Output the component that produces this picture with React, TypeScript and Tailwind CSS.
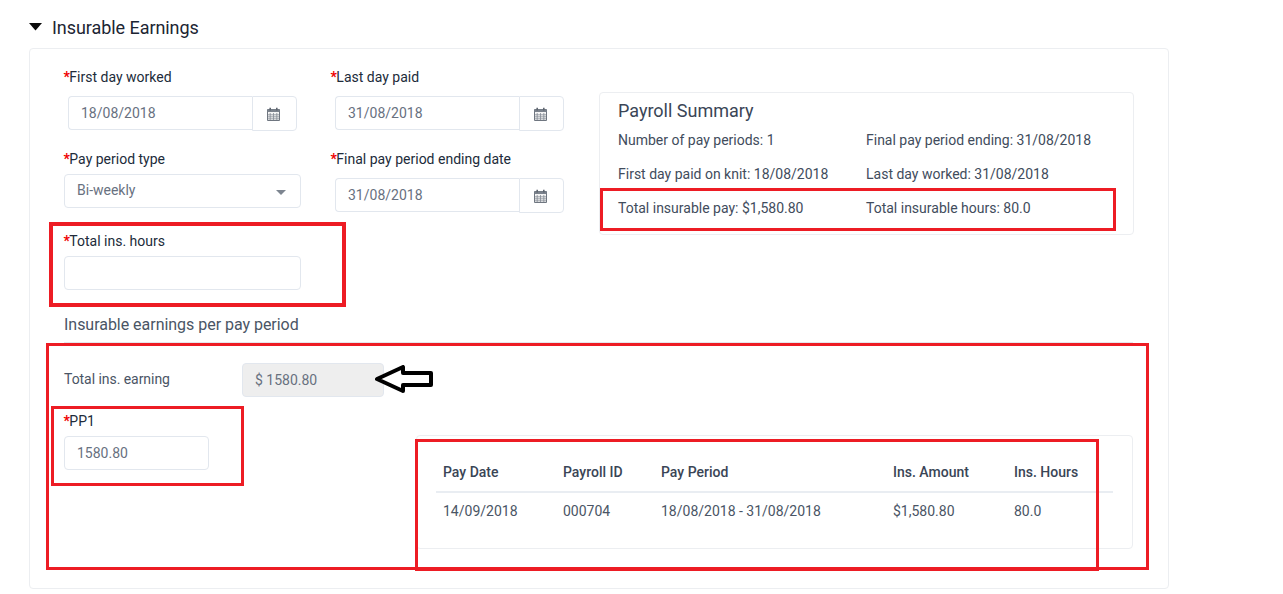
import React from "react";

const Cal = () => (
  <svg width="13" height="14" viewBox="0 0 13 14" className="block">
    <path d="M0.5 2.5H12.5V13.5H0.5Z" fill="#f4f4f4" stroke="#6f7680" />
    <path d="M0.5 2.5H12.5V5H0.5Z" fill="#7b828c" />
    <path d="M3.2 6V13M6.5 6V13M9.8 6V13M1 7.8H12M1 9.8H12M1 11.8H12" stroke="#858c95" strokeWidth="0.8" />
    <path d="M3.2 0.8V3.4M9.8 0.8V3.4" stroke="#5f6670" strokeWidth="1.6" />
  </svg>
);

const Label = ({ children }: { children: React.ReactNode }) => (
  <div className="h-[20px] text-[14px] leading-[20px] text-[#212b3a]">
    <span className="-ml-[0.5px] mr-[-0.5px] font-bold text-[#f00000]">*</span>
    {children}
  </div>
);

const DateField = ({ value }: { value: string }) => (
  <div className="ml-[4px] flex h-[35px] w-[229px]">
    <div className="flex h-[34px] w-[184px] items-center rounded-l-[4px] border border-r-0 border-[#e2e7ee] pl-[12px] pt-[1px] text-[14px] text-[#68717f]">
      {value}
    </div>
    <div className="flex h-[35px] w-[45px] items-center justify-center rounded-r-[4px] border border-[#e2e7ee] pr-[2px]">
      <Cal />
    </div>
  </div>
);

const Red = ({ className }: { className: string }) => (
  <div className={`pointer-events-none absolute border-[3px] border-[#ed1c24] ${className}`} />
);

const summary = [
  ["Number of pay periods: 1", "Final pay period ending: 31/08/2018"],
  ["First day paid on knit: 18/08/2018", "Last day worked: 31/08/2018"],
  ["Total insurable pay: $1,580.80", "Total insurable hours: 80.0"],
];

const cols = "grid grid-cols-[120px_98px_232px_121px_1fr]";

export default function App() {
  return (
    <div className="relative h-[594px] w-[1283px] overflow-hidden bg-white font-['Roboto',sans-serif]">
      <div className="ml-[29px] flex h-[48px] items-start pt-[17px]">
        <svg width="13" height="8" viewBox="0 0 13 8" className="mt-[6px] block">
          <path d="M0 0H13L6.5 7.5Z" fill="#0a0a0a" />
        </svg>
        <div className="ml-[10px] text-[18px] leading-[21px] tracking-[-0.06px] text-[#1c2533]">Insurable Earnings</div>
      </div>

      <div className="ml-[29px] h-[541px] w-[1140px] rounded-[4px] border border-[#eceef1] pl-[34px] pt-[18px]">
        <div className="flex">
          <div className="grid w-[535px] grid-cols-[267px_268px] content-start">
            <div className="h-[82px]">
              <Label>First day worked</Label>
              <div className="mt-[9px]"><DateField value="18/08/2018" /></div>
            </div>
            <div className="h-[82px]">
              <Label>Last day paid</Label>
              <div className="mt-[9px]"><DateField value="31/08/2018" /></div>
            </div>
            <div>
              <Label>Pay period type</Label>
              <div className="mt-[5px] flex h-[34px] w-[237px] items-center justify-between rounded-[4px] border border-[#e2e7ee] pl-[12px] pr-[14px] text-[14px] text-[#68717f]">
                <span className="-mt-[2px]">Bi-weekly</span>
                <svg width="10" height="5" viewBox="0 0 10 5" className="mt-[2px] block"><path d="M0 0H10L5 5Z" fill="#7d8590" /></svg>
              </div>
            </div>
            <div>
              <Label>Final pay period ending date</Label>
              <div className="mt-[9px]"><DateField value="31/08/2018" /></div>
            </div>
          </div>
          <div className="mt-[25px] h-[143px] w-[535px] rounded-[4px] border border-[#eceef1] pl-[18px] pt-[6px]">
            <div className="text-[18px] leading-[24px] text-[#3a4556]">Payroll Summary</div>
            <div className="mt-[7px] grid grid-cols-[248px_1fr] text-[14px] leading-[20px] text-[#414c5c]">
              {summary.flat().map((t) => (
                <div key={t} className="h-[34px]">{t}</div>
              ))}
            </div>
          </div>
        </div>

        <div className="-mt-[4px]">
          <Label>Total ins. hours</Label>
          <div className="mt-[5px] h-[34px] w-[237px] rounded-[4px] border border-[#e2e7ee]" />
        </div>

        <div className="mt-[25px] h-[28px] w-[1069px] border-b border-[#e4e7ec] text-[16px] leading-[20px] tracking-[-0.03px] text-[#4a5565]">
          Insurable earnings per pay period
        </div>

        <div className="mt-[20px] flex h-[34px] items-center">
          <div className="-mt-[2px] w-[178px] text-[14px] tracking-[-0.05px] text-[#4a5565]">Total ins. earning</div>
          <div className="flex h-[34px] w-[142px] items-center rounded-[4px] border border-[#e2e7ee] bg-[#eeeeee] pl-[12px] text-[14px] text-[#68717f]">
            $ 1580.80
          </div>
        </div>

        <div className="flex">
          <div className="w-[352px] pt-[14px]">
            <Label>PP1</Label>
            <div className="mt-[5px] flex h-[34px] w-[145px] items-center rounded-[4px] border border-[#e2e7ee] pl-[12px] pt-[1px] text-[14px] text-[#68717f]">
              1580.80
            </div>
          </div>
          <div className="mt-[38px] h-[114px] w-[717px] rounded-[4px] border border-[#eceef1] px-[19px]">
            <div className={`${cols} h-[57px] items-end border-b-2 border-[#e9edf2] pl-[7px] pb-[9px] text-[14px] font-medium leading-[20px] text-[#3a4556]`}>
              <div>Pay Date</div>
              <div>Payroll ID</div>
              <div>Pay Period</div>
              <div>Ins. Amount</div>
              <div>Ins. Hours</div>
            </div>
            <div className={`${cols} pl-[7px] pt-[8px] text-[14px] leading-[20px] text-[#4a5565]`}>
              <div>14/09/2018</div>
              <div>000704</div>
              <div>18/08/2018 - 31/08/2018</div>
              <div>$1,580.80</div>
              <div>80.0</div>
            </div>
          </div>
        </div>
      </div>

      <Red className="left-[49px] top-[222px] h-[85px] w-[297px] border-[4px]" />
      <Red className="left-[600px] top-[188px] h-[43px] w-[516px]" />
      <Red className="left-[46px] top-[343px] h-[227px] w-[1103px]" />
      <Red className="left-[51px] top-[406px] h-[80px] w-[193px]" />
      <Red className="left-[415px] top-[439px] h-[132px] w-[684px]" />

      <svg width="60" height="30" viewBox="0 0 60 30" className="absolute left-[374px] top-[365px]">
        <path d="M3 14L29 2V8H57V20H29V26Z" fill="white" stroke="black" strokeWidth="4" strokeLinejoin="round" />
      </svg>
    </div>
  );
}
